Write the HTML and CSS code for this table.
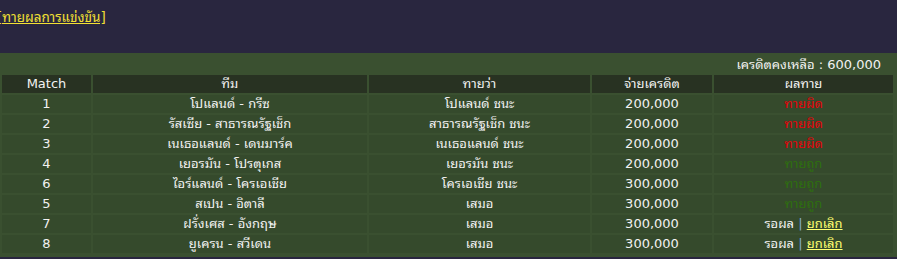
FILE: index.html
```html
<!DOCTYPE html>
<html lang="th">
<head>
<meta charset="utf-8">
<title>ทายผลการแข่งขัน</title>
<link rel="stylesheet" href="styles.css">
</head>
<body>
<div class="topbar">
  <a class="toplink" href="#">[ทายผลการแข่งขัน]</a>
</div>
<div class="panel">
  <div class="credit">เครดิตคงเหลือ : 600,000</div>
  <table class="bets">
    <colgroup>
      <col class="c-match"><col class="c-team"><col class="c-guess"><col class="c-pay"><col class="c-res">
    </colgroup>
    <thead>
      <tr><th>Match</th><th>ทีม</th><th>ทายว่า</th><th>จ่ายเครดิต</th><th>ผลทาย</th></tr>
    </thead>
    <tbody>
      <tr><td>1</td><td>โปแลนด์ - กรีซ</td><td>โปแลนด์ ชนะ</td><td>200,000</td><td class="lose">ทายผิด</td></tr>
      <tr><td>2</td><td>รัสเซีย - สาธารณรัฐเช็ก</td><td>สาธารณรัฐเช็ก ชนะ</td><td>200,000</td><td class="lose">ทายผิด</td></tr>
      <tr><td>3</td><td>เนเธอแลนด์ - เดนมาร์ค</td><td>เนเธอแลนด์ ชนะ</td><td>200,000</td><td class="lose">ทายผิด</td></tr>
      <tr><td>4</td><td>เยอรมัน - โปรตุเกส</td><td>เยอรมัน ชนะ</td><td>200,000</td><td class="win">ทายถูก</td></tr>
      <tr><td>6</td><td>ไอร์แลนด์ - โครเอเชีย</td><td>โครเอเชีย ชนะ</td><td>300,000</td><td class="win">ทายถูก</td></tr>
      <tr><td>5</td><td>สเปน - อิตาลี</td><td>เสมอ</td><td>300,000</td><td class="win">ทายถูก</td></tr>
      <tr><td>7</td><td>ฝรั่งเศส - อังกฤษ</td><td>เสมอ</td><td>300,000</td><td>รอผล <span class="sep">|</span> <a class="cancel" href="#">ยกเลิก</a></td></tr>
      <tr><td>8</td><td>ยูเครน - สวีเดน</td><td>เสมอ</td><td>300,000</td><td>รอผล <span class="sep">|</span> <a class="cancel" href="#">ยกเลิก</a></td></tr>
    </tbody>
  </table>
</div>
</body>
</html>
```
FILE: styles.css
```css
html, body {
  margin: 0;
  padding: 0;
}
body {
  background: #29263f;
  font-family: "DejaVu Sans", "Noto Sans Thai Looped", "Noto Sans Thai", sans-serif;
  font-size: 13px;
  color: #f2f2f2;
  width: 897px;
  height: 259px;
  overflow: hidden;
}
.topbar {
  height: 53px;
  box-sizing: border-box;
  padding-top: 7px;
  margin-left: -3px;
}
.toplink {
  color: #f2e033;
  text-decoration: underline;
  line-height: 20px;
  font-size: 13.5px;
}
.panel {
  background: #3a5030;
  padding-bottom: 2px;
}
.credit {
  height: 20px;
  line-height: 23px;
  text-align: right;
  padding-right: 16px;
}
.bets {
  border-collapse: separate;
  border-spacing: 2px;
  width: 893px;
  table-layout: fixed;
}
.c-match { width: 89px; }
.c-team { width: 274px; }
.c-guess { width: 221px; }
.c-pay { width: 120px; }
.c-res { width: 179px; }
.bets th, .bets td {
  height: 18px;
  padding: 0;
  text-align: center;
  font-weight: normal;
  line-height: 18px;
  white-space: nowrap;
}
.bets th {
  background: #283222;
}
.bets td {
  background: #354a2c;
}
.bets td.lose { color: #e8000a; }
.bets td.win { color: #2e700e; }
.sep { color: #88aacc; }
.cancel {
  color: #ffff70;
  text-decoration: underline;
}
```
